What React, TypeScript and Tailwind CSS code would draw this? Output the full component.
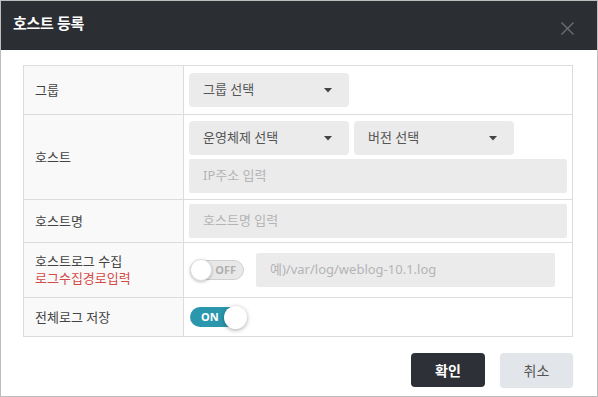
import React from 'react';

const font = { fontFamily: '"Noto Sans", "Noto Sans CJK KR", sans-serif' };

function Caret() {
  return (
    <svg width="8" height="5" viewBox="0 0 8 5" className="shrink-0">
      <path d="M0 0 L8 0 L4 4.5 Z" fill="#444" />
    </svg>
  );
}

function Select({ label, width }: { label: string; width: string }) {
  return (
    <div className={`${width} h-[34px] rounded-[4px] bg-[#ebebec] flex items-center justify-between pl-[14px] pr-[17px] text-[13px] text-[#555]`}>
      <span>{label}</span>
      <Caret />
    </div>
  );
}

function Input({ placeholder, className }: { placeholder: string; className: string }) {
  return (
    <div className={`${className} h-[34px] rounded-[2px] bg-[#ebebec] flex items-center pl-[14px] text-[13px] text-[#b4b4b4]`}>
      {placeholder}
    </div>
  );
}

function Row({ label, children, height, sub }: { label: string; children: React.ReactNode; height: string; sub?: string }) {
  return (
    <div className={`flex ${height} border-b border-[#dcdcdc]`}>
      <div className="w-[160px] shrink-0 bg-[#f9f9f9] border-r border-[#dcdcdc] flex flex-col justify-center pl-[11px] text-[13px] text-[#444] leading-[17px]">
        <span>{label}</span>
        {sub && <span className="text-[#d44a47]">{sub}</span>}
      </div>
      <div className="flex-1 pl-[5px] flex flex-col justify-center">{children}</div>
    </div>
  );
}

export default function App() {
  return (
    <div style={font} className="w-[598px] h-[397px] border border-[#bdbdbd] bg-white flex flex-col">
      <header className="h-[49px] bg-[#2b2e33] flex items-center justify-between pl-[12px] pr-[23px] pb-[4px]">
        <h1 className="text-[15px] font-bold text-white tracking-[-0.3px]">호스트 등록</h1>
        <svg width="13" height="13" viewBox="0 0 13 13" className="mt-[10px]">
          <path d="M0.5 0.5 L12.5 12.5 M12.5 0.5 L0.5 12.5" stroke="#6b6e73" strokeWidth="1.4" />
        </svg>
      </header>

      <div className="pl-[22px] pt-[15px]">
        <div className="w-[550px] border-t border-l border-r border-[#dcdcdc]">
          <Row label="그룹" height="h-[49px]">
            <Select label="그룹 선택" width="w-[160px]" />
          </Row>
          <Row label="호스트" height="h-[85px]">
            <div className="flex flex-col gap-[4px]">
              <div className="flex gap-[5px]">
                <Select label="운영체제 선택" width="w-[160px]" />
                <Select label="버전 선택" width="w-[160px]" />
              </div>
              <Input placeholder="IP주소 입력" className="w-[378px]" />
            </div>
          </Row>
          <Row label="호스트명" height="h-[43px]">
            <Input placeholder="호스트명 입력" className="w-[378px]" />
          </Row>
          <Row label="호스트로그 수집" sub="로그수집경로입력" height="h-[55px]">
            <div className="flex items-center gap-[12px]">
              <div className="ml-[1px] w-[54px] h-[20px] rounded-full bg-[#e8e8e8] border border-[#d0d0d0] flex items-center justify-between">
                <div className="w-[22px] h-[22px] -ml-[1px] rounded-full bg-white border border-[#e0e0e0] shadow-[0_1px_3px_rgba(0,0,0,0.25)]" />
                <span className="pr-[7px] text-[11px] font-bold text-[#b0b0b0]">OFF</span>
              </div>
              <Input placeholder="예)/var/log/weblog-10.1.log" className="w-[299px] pl-[12px]" />
            </div>
          </Row>
          <Row label="전체로그 저장" height="h-[39px]">
            <div className="ml-[1px] w-[54px] h-[20px] rounded-full bg-[#2a97ad] flex items-center justify-between">
              <span className="pl-[11px] text-[11px] font-bold text-white">ON</span>
              <div className="w-[23px] h-[23px] -mr-[3px] rounded-full bg-white shadow-[0_1px_4px_rgba(0,0,0,0.35)]" />
            </div>
          </Row>
        </div>
      </div>

      <div className="w-[572px] flex justify-end gap-[15px] mt-[16px]">
        <button className="w-[74px] h-[34px] rounded-[4px] bg-[#2d3036] text-white text-[14px] font-bold">확인</button>
        <button className="w-[73px] h-[34px] rounded-[4px] bg-[#e2e5e9] text-[#555] text-[14px] shadow-[0_1px_1px_rgba(0,0,0,0.12)]">취소</button>
      </div>
    </div>
  );
}
